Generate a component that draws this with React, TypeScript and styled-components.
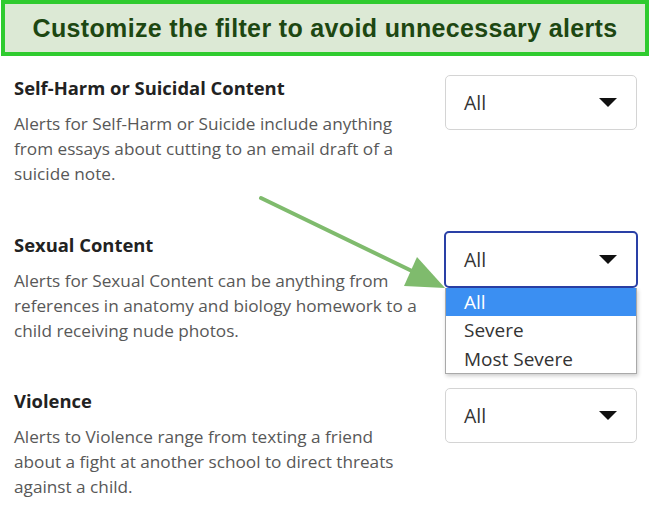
import React from 'react'
import styled, { createGlobalStyle } from 'styled-components'

const GlobalStyle = createGlobalStyle`
  html, body {
    margin: 0;
    padding: 0;
    background: #ffffff;
  }
  body {
    font-family: "Open Sans", "Liberation Sans", sans-serif;
  }
`

const Page = styled.div`
  position: relative;
  width: 650px;
  height: 510px;
  overflow: hidden;
  background: #fff;
`

const Banner = styled.div`
  box-sizing: border-box;
  margin: 0 1px;
  height: 56px;
  border: 4px solid #2fcb2f;
  background: #dce9d5;
  display: flex;
  align-items: center;
  justify-content: center;
`

const BannerText = styled.span`
  display: inline-block;
  font-family: "Liberation Sans", Arial, sans-serif;
  font-weight: bold;
  font-size: 25px;
  letter-spacing: 0.35px;
  color: #1d4712;
  white-space: nowrap;
`

const List = styled.div`
  display: flex;
  flex-direction: column;
  padding: 19px 13px 0 14px;
`

const Row = styled.div`
  display: flex;
  justify-content: space-between;
  align-items: flex-start;
  height: 156.5px;
`

const Info = styled.div`
  width: 406px;
`

const Title = styled.div`
  font-family: "Open Sans", sans-serif;
  font-weight: 700;
  font-size: 18.4px;
  line-height: 26px;
  color: #222;
`

const Desc = styled.p`
  margin: 10px 0 0;
  font-family: "Open Sans", sans-serif;
  font-size: 17.2px;
  line-height: 25px;
  color: #585858;
`

const SelectWrap = styled.div`
  position: relative;
  width: 192px;
`

const SelectBox = styled.div<{ $focused?: boolean }>`
  box-sizing: border-box;
  height: ${p => (p.$focused ? '57px' : '55px')};
  margin: ${p => (p.$focused ? '-1px -1px 0' : '0')};
  border: ${p => (p.$focused ? '2px solid #2a40a6' : '1px solid #d4d4d4')};
  border-radius: 5px;
  display: flex;
  align-items: center;
  justify-content: space-between;
  padding: 0 19px 0 18px;
  font-family: "Open Sans", sans-serif;
  font-size: 19.5px;
  color: #333;
  background: #fff;
`

const Caret = styled.span`
  width: 0;
  height: 0;
  border-left: 9px solid transparent;
  border-right: 9px solid transparent;
  border-top: 9px solid #111;
`

const Menu = styled.div`
  position: absolute;
  top: 56px;
  left: 0;
  width: 192px;
  box-sizing: border-box;
  border: 1px solid #a9a9a9;
  border-top: none;
  background: #fff;
  box-shadow: 1px 2px 4px rgba(0, 0, 0, 0.2);
  z-index: 2;
`

const Option = styled.div<{ $active?: boolean }>`
  height: 28.5px;
  line-height: 28.5px;
  padding-left: 18px;
  font-family: "Open Sans", sans-serif;
  font-size: 19px;
  color: ${p => (p.$active ? '#fff' : '#333')};
  background: ${p => (p.$active ? '#3b8ff2' : '#fff')};
`

const ArrowLayer = styled.svg`
  position: absolute;
  left: 0;
  top: 0;
  pointer-events: none;
  z-index: 3;
`

const sections = [
  {
    title: 'Self-Harm or Suicidal Content',
    text: 'Alerts for Self-Harm or Suicide include anything from essays about cutting to an email draft of a suicide note.',
  },
  {
    title: 'Sexual Content',
    text: 'Alerts for Sexual Content can be anything from references in anatomy and biology homework to a child receiving nude photos.',
    open: true,
  },
  {
    title: 'Violence',
    text: 'Alerts to Violence range from texting a friend about a fight at another school to direct threats against a child.',
  },
]

const options = ['All', 'Severe', 'Most Severe']

export default function App() {
  return (
    <Page>
      <GlobalStyle />
      <Banner>
        <BannerText>Customize the filter to avoid unnecessary alerts</BannerText>
      </Banner>
      <List>
        {sections.map(s => (
          <Row key={s.title}>
            <Info>
              <Title>{s.title}</Title>
              <Desc>{s.text}</Desc>
            </Info>
            <SelectWrap>
              <SelectBox $focused={s.open}>
                <span>All</span>
                <Caret />
              </SelectBox>
              {s.open && (
                <Menu>
                  {options.map((o, i) => (
                    <Option key={o} $active={i === 0}>{o}</Option>
                  ))}
                </Menu>
              )}
            </SelectWrap>
          </Row>
        ))}
      </List>
      <ArrowLayer width="650" height="510" viewBox="0 0 650 510">
        <line x1="261" y1="198" x2="414" y2="272" stroke="#7fbb6d" strokeWidth="4" strokeLinecap="round" />
        <polygon points="445,288 404,286 417,257" fill="#7fbb6d" />
      </ArrowLayer>
    </Page>
  )
}
